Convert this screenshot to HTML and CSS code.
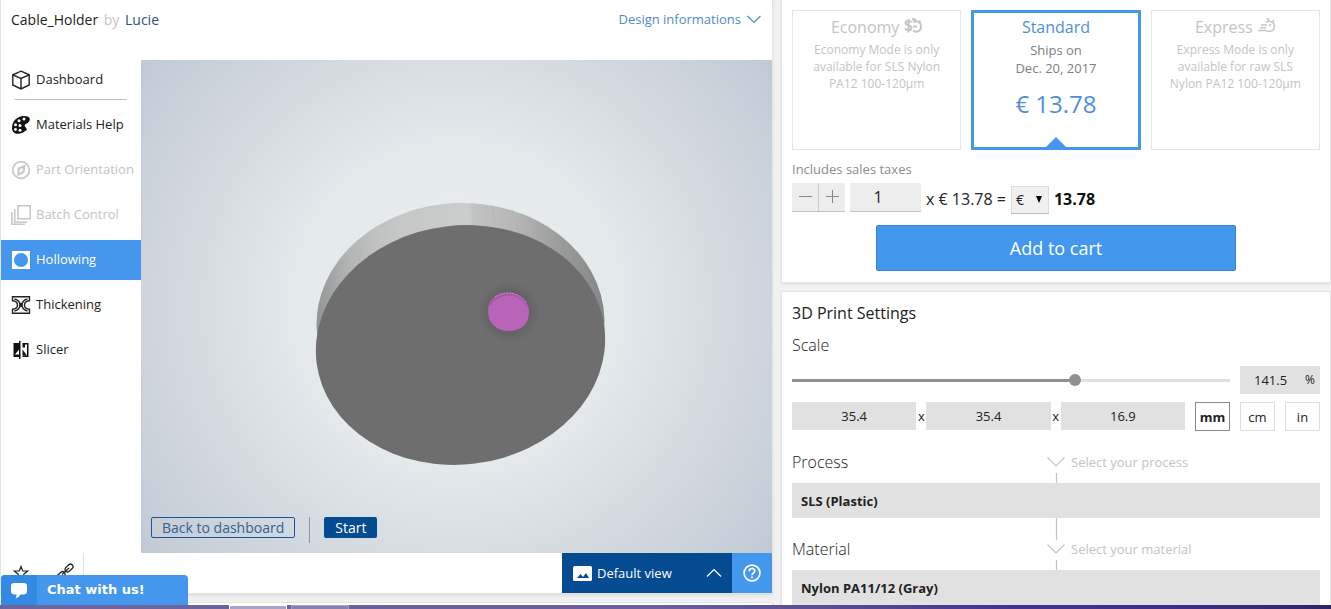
FILE: index.html
```html
<!DOCTYPE html>
<html lang="en">
<head>
<meta charset="utf-8">
<title>Cable_Holder</title>
<link rel="stylesheet" href="styles.css">
</head>
<body>
<main class="page">
  <div class="left-column">
    <section class="panel designer">
      <header class="designer-header">
        <h1 class="title">Cable_Holder <span class="by">by</span> <a class="author" href="#">Lucie</a></h1>
        <a class="info-link" href="#">Design informations
          <svg width="14" height="9" viewBox="0 0 14 9" fill="none" stroke="currentColor" stroke-width="1.200"><path d="M.5 1 7 7.500 13.500 1"/></svg>
        </a>
      </header>
      <div class="workspace">
        <nav class="tools">
          <a class="tool" href="#">
            <svg class="icon" viewBox="0 0 20 20" fill="none" stroke="#222" stroke-width="1.400"><path d="M10 1.200 18.200 4.800V15L10 19 1.800 15V4.800ZM1.800 4.800 10 8.500 18.200 4.800M10 8.500V19"/></svg>
            Dashboard</a>
          <a class="tool divided" href="#">
            <svg class="icon" viewBox="0 0 20 20"><path fill="#111" d="M13 1C6 1.500 1 6 1 13c0 4 3 6 6.500 5.800 2.500-.2 4-1 6-2.300 1.800-1.300 2.500-.5 2.200-2.500-.3-1.500-2-1.700-2-3.500s3-2 4-3.500C20 4.500 19 1 13 1Z"/><g fill="#fff"><circle cx="8" cy="5.700" r="1.500"/><circle cx="13" cy="4" r="1.500"/><circle cx="4.500" cy="9.800" r="1.500"/><circle cx="9" cy="10.500" r="1.500"/><circle cx="4.500" cy="14.500" r="1.400"/><circle cx="9" cy="15.200" r="1.500"/></g></svg>
            Materials Help</a>
          <a class="tool disabled" href="#">
            <svg class="icon" viewBox="0 0 20 20"><circle cx="10" cy="10" r="8.300" fill="none" stroke="#c8c8c8" stroke-width="1.700"/><path fill="#c8c8c8" fill-rule="evenodd" d="m14.500 4.500-1 8.200-7.300 3.500.5-8.500ZM12 8 8.800 9.300l-.5 3.500 3.200-1.500Z"/></svg>
            Part Orientation</a>
          <a class="tool disabled" href="#">
            <svg class="icon" viewBox="0 0 20 20" fill="none" stroke="#c8c8c8" stroke-width="1.600"><path d="M7 .8h12.200v13H7ZM3.700 4v13.200H16M.8 7v12.200h13"/></svg>
            Batch Control</a>
          <a class="tool active" href="#">
            <svg class="icon" viewBox="0 0 20 20"><path fill="#fff" d="M1 1h18v18H1Z"/><circle cx="10" cy="10" r="7" fill="#4497ec"/></svg>
            Hollowing</a>
          <a class="tool" href="#">
            <svg class="icon" viewBox="0 0 20 20"><path fill="#fff" stroke="#222" stroke-width="1.400" d="M1.500 1.700h17v4c-3 .2-5 2-5 4.300s2 4.100 5 4.300v4h-17v-4c3-.2 5-2 5-4.300s-2-4.100-5-4.300Z"/><path fill="none" stroke="#222" stroke-width="1.400" d="M3.500 4c4 1 5.500 3 5.500 6s-1.500 5-5.500 6M16.500 4c-4 1-5.500 3-5.500 6s1.500 5 5.500 6"/><path fill="#222" d="M8.500 8h3v4h-3Z"/></svg>
            Thickening</a>
          <a class="tool" href="#">
            <svg class="icon" viewBox="0 0 20 20"><path fill="#111" d="M2.500 3H8V1h1.500v18H8v-2H2.500ZM11.500 3h6v14h-6v-1.500H16v-11h-2v3h-2.500Z"/><path fill="#fff" d="m4 14.500 4-5v5Z"/><path fill="#111" d="m11.500 9.500 4.500 6h-4.500Z"/></svg>
            Slicer</a>
        </nav>
        <div class="viewer">
          <svg class="model" viewBox="0 0 631 493" role="img" aria-label="3D model">
            <defs>
              <linearGradient id="rim" x1="175" x2="464" gradientUnits="userSpaceOnUse"><stop offset="0" stop-color="#929494"/><stop offset=".12" stop-color="#b3b4b4"/><stop offset=".22" stop-color="#c0c1c1"/><stop offset=".3" stop-color="#c6c7c7"/><stop offset=".54" stop-color="#cbcccc"/><stop offset=".56" stop-color="#c1c2c2"/><stop offset=".7" stop-color="#b7b7b7"/><stop offset=".85" stop-color="#9b9c9c"/><stop offset="1" stop-color="#858686"/></linearGradient>
              <radialGradient id="shade"><stop offset=".55" stop-color="#606060"/><stop offset="1" stop-color="#6e6e6e"/></radialGradient>
            </defs>
            <ellipse cx="319.500" cy="263" rx="144" ry="120" transform="rotate(-2 319.500 263)" fill="url(#rim)"/>
            <g fill="none" stroke="#a8a8a8" stroke-opacity=".35"><path d="m351 144 3 22M371 149l7 24M389 156l10 24M406 165l13 26M222 184l-4 17"/></g>
            <ellipse cx="319.500" cy="285" rx="145" ry="119.500" transform="rotate(-7 319.500 285)" fill="#6e6e6e"/>
            <circle cx="368" cy="252" r="31" fill="url(#shade)"/>
            <path fill="#b963b9" d="M347 251c0-12 9-18 20-18s21 7 21 19c0 13-9 19-20 19-13 0-21-8-21-20Z"/>
            <path fill="none" stroke="#a855aa" stroke-width="2" d="M349 245c6-13 31-15 37 1"/>
            <path fill="none" stroke="#d08ad0" stroke-dasharray="2 1" d="M354 237c10-7 24-5 31 6"/>
          </svg>
          <div class="viewer-actions">
            <button class="btn-outline" type="button">Back to dashboard</button>
            <span class="separator"></span>
            <button class="btn-solid" type="button">Start</button>
          </div>
        </div>
      </div>
      <footer class="designer-footer">
        <div class="quick">
          <button class="icon-btn" type="button" aria-label="Favourite"><svg width="18" height="18" viewBox="0 0 18 18" fill="none" stroke="#222" stroke-width="1.200"><path d="m9 3.500 1.700 4.500h5l-4 3.300L13.500 17 9 13.500 4.500 17l1.800-5.700-4-3.300h5Z"/></svg></button>
          <button class="icon-btn" type="button" aria-label="Copy link"><svg width="18" height="18" viewBox="0 0 18 18" fill="none" stroke="#222" stroke-width="1.300"><rect x="8.500" y="2.500" width="9" height="5" rx="2.500" transform="rotate(-43 13 5)"/><rect x=".5" y="10" width="9" height="5" rx="2.500" transform="rotate(-43 5 12.500)"/><path d="m6 11.500 7-6.500"/></svg></button>
        </div>
        <div class="view-bar">
          <button class="view-select" type="button">
            <svg width="19" height="15" viewBox="0 0 19 15"><rect width="19" height="15" rx="1.500" fill="#fff"/><path fill="#044b91" d="M4 12 7.500 8 10 11l3-4 3 5Z"/></svg>
            <span>Default view</span>
            <svg class="up" width="16" height="10" viewBox="0 0 16 10" fill="none" stroke="#fff" stroke-width="1.200"><path d="M1 8.500 8 1.500l7 7"/></svg>
          </button>
          <button class="help" type="button" aria-label="Help"><svg width="18" height="18" viewBox="0 0 18 18" fill="none" stroke="#fff" stroke-width="1.700"><circle cx="9" cy="9" r="7.900"/><path d="M6.200 7.200c0-3.600 5.600-3.600 5.600-.2 0 2-2.800 2-2.800 4.200M9 12.500v1.700"/></svg></button>
        </div>
      </footer>
    </section>
    <section class="panel next-panel"></section>
  </div>

  <div class="right-column">
    <section class="panel order">
      <div class="modes">
        <article class="mode">
          <h2 class="mode-name">Economy
            <svg width="18" height="16" viewBox="0 0 18 16" fill="none" stroke="#c4c4c4" stroke-width="1.900"><path d="M7.500 4.500C6 2.500 1.500 2.500 1.500 5c0 3 6 1.500 6 5 0 3-5 3-6.500.5M4.500 1v13.500M9 4.500c4-3 8 0 8 4 0 5-5 6.500-8 4M8 1.300h4M10.500 1v3M9 8.500h4M15 2.500l1.500 1.500"/></svg></h2>
          <p class="mode-note">Economy Mode is only available for SLS Nylon PA12 100-120µm</p>
        </article>
        <article class="mode selected">
          <h2 class="mode-name">Standard</h2>
          <p class="ships">Ships on<br>Dec. 20, 2017</p>
          <p class="price">€ 13.78</p>
          <svg class="notch" width="20" height="10" viewBox="0 0 20 10"><path fill="#4497ec" d="M0 10 10 0l10 10Z"/></svg>
        </article>
        <article class="mode">
          <h2 class="mode-name">Express
            <svg width="18" height="16" viewBox="0 0 18 16" fill="none" stroke="#c4c4c4" stroke-width="1.400"><path d="M8 4.500c4-3 8.500 0 8.500 3.800 0 5-5.500 6.500-9 4M3 7h6M2 9.800h6M0 12.500h8M8.500 1h3M10 1v2.500M14.500 2l1.500 1.500M11 8l2-2"/></svg></h2>
          <p class="mode-note">Express Mode is only available for raw SLS Nylon PA12 100-120µm</p>
        </article>
      </div>
      <p class="taxes">Includes sales taxes</p>
      <div class="quantity">
        <div class="stepper">
          <button class="step" type="button" aria-label="Less"><svg width="14" height="14" viewBox="0 0 14 14" stroke="#888"><path d="M1 6.500h13"/></svg></button>
          <button class="step" type="button" aria-label="More"><svg width="14" height="14" viewBox="0 0 14 14" stroke="#888"><path d="M1 6.500h13M7.500 0v13"/></svg></button>
        </div>
        <input class="amount" type="text" value="1" aria-label="Quantity">
        <span class="unit-price">x € 13.78 =</span>
        <span class="currency-wrap"><select class="currency" aria-label="Currency"><option>€</option></select><svg class="caret" width="6" height="7" viewBox="0 0 6 7"><path d="M0 0h6L3 7Z"/></svg></span>
        <strong class="total">13.78</strong>
      </div>
      <button class="add-cart" type="button">Add to cart</button>
    </section>

    <section class="panel settings">
      <h2 class="settings-title">3D Print Settings</h2>
      <h3 class="label scale-label">Scale</h3>
      <div class="scale-row">
        <input class="slider" type="range" min="10" max="212" step="0.5" value="141.5" aria-label="Scale">
        <label class="percent"><input class="percent-value" type="text" value="141.5"> %</label>
      </div>
      <div class="size-row">
        <div class="dims">
          <input class="dim" type="text" value="35.4" aria-label="Width"><span>x</span>
          <input class="dim" type="text" value="35.4" aria-label="Depth"><span>x</span>
          <input class="dim" type="text" value="16.9" aria-label="Height">
        </div>
        <div class="units">
          <button class="unit chosen" type="button">mm</button>
          <button class="unit" type="button">cm</button>
          <button class="unit" type="button">in</button>
        </div>
      </div>
      <div class="choice-head">
        <h3 class="label">Process</h3>
        <svg width="18" height="52" viewBox="0 0 18 52" fill="none" stroke="#c4c4c4" stroke-width="1.200"><path d="M.5 26.500 9 35l8.500-8.500M9.500 42v10"/></svg>
        <span class="hint">Select your process</span>
      </div>
      <button class="choice" type="button">SLS (Plastic)</button>
      <div class="choice-head">
        <h3 class="label">Material</h3>
        <svg width="18" height="52" viewBox="0 0 18 52" fill="none" stroke="#c4c4c4" stroke-width="1.200"><path d="M9.500 0v22M.5 26.500 9 35l8.500-8.500M9.500 42v10"/></svg>
        <span class="hint">Select your material</span>
      </div>
      <button class="choice" type="button">Nylon PA11/12 (Gray)</button>
    </section>
  </div>

  <button class="chat" type="button">
    <span class="chat-icon"><svg width="18" height="17" viewBox="0 0 18 17"><path fill="#fff" d="M4 1h10q3 0 3 3v5q0 3-3 3.500h-3.500Q9 15.500 5.500 16.500q1-2 1-4H4Q1 12 1 9V4q0-3 3-3Z"/></svg></span>
    <span class="chat-text">Chat with us!</span>
  </button>
</main>
<div class="taskbar"><span class="task current"></span><span class="task"></span></div>
</body>
</html>
```

FILE: styles.css
```css
* { box-sizing: border-box; }

body {
  margin: 0;
  height: 100vh;
  display: flex;
  flex-direction: column;
  overflow: hidden;
  background: #f1f1f1;
  color: #222;
  font: 13px/18px "Open Sans", sans-serif;
}

h1, h2, h3, p { margin: 0; font-weight: 400; }
a { color: inherit; text-decoration: none; }
svg { display: block; flex: none; }
button, input, select {
  margin: 0;
  padding: 0;
  border: 0;
  border-radius: 0;
  font: inherit;
  color: inherit;
}
button { cursor: pointer; }

.page {
  position: relative;
  flex: 1;
  min-height: 0;
  display: grid;
  grid-template-columns: 771fr 548fr;
  grid-template-rows: 100%;
  gap: 10px;
  padding: 0 1px;
  overflow: hidden;
}
.left-column, .right-column {
  display: flex;
  flex-direction: column;
  gap: 10px;
  min-width: 0;
}
.panel {
  background: #fff;
  box-shadow: 0 0 1px 1px #e4e4e4, 0 2px 3px #d4d4d4;
}

/* Designer */
.designer { flex: 1; min-height: 0; display: flex; flex-direction: column; }
.next-panel { height: 2px; }
.designer-header {
  height: 60px;
  padding: 10px 11px 0 10px;
  display: flex;
  justify-content: space-between;
  align-items: flex-start;
}
.title { font-size: 14px; line-height: 20px; }
.by { color: #c4c4c4; margin: 0 2px; }
.author { color: #2d4f7c; }
.info-link { display: flex; align-items: center; gap: 6px; color: #4f8cc4; }

.workspace { flex: 1; min-height: 0; display: flex; }
.tools { width: 140px; flex: none; display: flex; flex-direction: column; gap: 5px; }
.tool { position: relative; height: 40px; padding: 0 0 2px 10px; display: flex; align-items: center; gap: 5px; white-space: nowrap; }
.icon { width: 20px; height: 20px; margin-top: 2px; }
.divided::before {
  content: "";
  position: absolute;
  left: 14px;
  right: 14px;
  top: -6px;
  border-top: 1px solid #bdbdbd;
}
.disabled { color: #c4c4c4; }
.active { background: #4497ec; color: #fff; }

.viewer {
  position: relative;
  flex: 1;
  background: radial-gradient(circle farthest-corner at 50% 50%, #ebeff1 0%, #e4e9ec 40%, #d5dbe1 65%, #c1cad4 100%);
}
.model { width: 100%; height: 100%; }
.viewer-actions { position: absolute; left: 10px; bottom: 10px; display: flex; align-items: flex-start; gap: 14px; font-size: 14px; }
.btn-outline, .btn-solid { height: 21px; line-height: 18px; border-radius: 2px; }
.btn-outline { padding: 0 10px; border: 1px solid #1d559b; background: transparent; color: #35608f; }
.btn-solid { padding: 0 11px; background: #044b91; color: #fff; }
.separator { height: 26px; border-left: 1px solid #8e98a4; }

.designer-footer { height: 40px; display: flex; justify-content: space-between; }
.quick { width: 83px; padding: 10px 9px 0 11px; display: flex; justify-content: space-between; align-items: flex-start; border-right: 1px solid #e2e2e2; }
.icon-btn { background: none; }
.view-bar { display: flex; color: #fff; }
.view-select { width: 170px; padding: 0 10px 0 11px; display: flex; align-items: center; gap: 5px; background: #044b91; }
.up { margin-left: auto; }
.help { width: 40px; display: grid; place-items: center; background: #4497ec; }

/* Order */
.order { padding: 10px 10px 11px; }
.modes { display: grid; grid-template-columns: repeat(3, 1fr); gap: 10px; }
.mode { position: relative; height: 140px; padding: 5px 12px; border: 1px solid #e6e6e6; text-align: center; color: #c4c4c4; }
.mode-name { display: flex; justify-content: center; align-items: center; gap: 5px; font-size: 16px; line-height: 22px; }
.mode-name svg { margin-bottom: 2px; }
.mode-note { margin-top: 3px; font-size: 12px; line-height: 17px; }
.selected { padding-top: 3px; border: 3px solid #4497ec; color: #4f8fd6; }
.ships { margin-top: 3px; color: #808080; }
.price { margin-top: 11px; font-size: 24px; line-height: 32px; }
.notch { position: absolute; left: calc(50% - 10px); bottom: 0; }
.taxes { margin-top: 10px; color: #8c8c8c; }
.quantity { margin-top: 5px; height: 31px; display: flex; align-items: flex-start; gap: 5px; font-size: 16px; }
.stepper { display: flex; gap: 1px; border-bottom: 1px solid #c0c0c0; background: #c8c8c8; }
.step { width: 26px; height: 28px; display: grid; place-items: center; background: #ededed; }
.amount { width: 71px; height: 29px; padding: 0 15px 0 0; text-align: center; background: #ededed; border-bottom: 1px solid #c0c0c0; }
.unit-price, .total { line-height: 32px; white-space: nowrap; }
.currency-wrap { position: relative; margin-top: 3px; }
.currency { display: block; appearance: none; width: 38px; height: 28px; padding-left: 4px; font-size: 14px; background: #f0f0f0; border: 1px solid #ddd; border-bottom-color: #bbb; }
.caret { position: absolute; right: 7px; top: 10px; pointer-events: none; }
.total { color: #111; }
.add-cart { display: block; width: 100%; max-width: 360px; height: 46px; margin: 11px auto 0; font-size: 18px; color: #fff; background: #4497ec; border: 1px solid #3a86d6; border-radius: 2px; }

/* Print settings */
.settings { flex: 1; min-height: 0; padding: 10px 10px 0; }
.settings-title { font-size: 16px; line-height: 22px; }
.label { font-size: 16px; line-height: 22px; font-weight: 300; }
.scale-label { margin-top: 10px; }
.scale-row { margin-top: 10px; display: flex; align-items: center; gap: 10px; }
.slider { appearance: none; flex: 1; min-width: 0; height: 12px; background: linear-gradient(to right, #909090 65%, #e1e1e1 65%) center / 100% 3px no-repeat; }
.slider::-webkit-slider-thumb { appearance: none; width: 12px; height: 12px; border-radius: 50%; background: #909090; }
.percent { width: 80px; height: 28px; padding-right: 5px; display: flex; align-items: center; gap: 4px; background: #e1e1e1; font-size: 12px; }
.percent-value { flex: 1; min-width: 0; text-align: center; background: transparent; font-size: 13px; }
.size-row { margin-top: 8px; display: flex; gap: 10px; }
.dims { flex: 1; min-width: 0; display: flex; }
.dims span { width: 10px; text-align: center; line-height: 28px; }
.dim { flex: 1; min-width: 0; height: 28px; text-align: center; background: #e1e1e1; }
.units { display: flex; gap: 10px; }
.unit { width: 35px; height: 29px; background: #fff; border: 1px solid #dedede; }
.chosen { border-color: #8a8a8a; font-weight: 700; }
.choice-head { display: grid; grid-template-columns: 1fr 18px 1fr; }
.choice-head .label { margin-top: 20px; }
.hint { margin: 22px 0 0 6px; color: #c4c4c4; }
.choice { display: block; width: 100%; height: 35px; padding: 0 9px; text-align: left; font-weight: 700; background: #e1e1e1; }

/* Chat widget over the page */
.chat { position: absolute; left: 1px; bottom: 0; width: 187px; height: 30px; display: flex; align-items: stretch; background: #4497ec; border-radius: 4px 4px 0 0; overflow: hidden; color: #fff; }
.chat-icon { width: 36px; display: grid; place-items: center; background: #328ae2; }
.chat-text { padding-left: 10px; font: 700 13px/30px "DejaVu Sans", sans-serif; }

.taskbar { height: 4px; padding-left: 229px; display: flex; gap: 4px; background: linear-gradient(to right, #6e649e 0%, #695f9c 50%, #5a4d90 62%, #483391 75%, #3c2d80 92%, #2c2462 100%); }
.task { width: 58px; background: #8880ae; border: 1px solid #aaa3c6; border-bottom: 0; }
.current { background: #aaa3c8; border-color: #fff; }
```
